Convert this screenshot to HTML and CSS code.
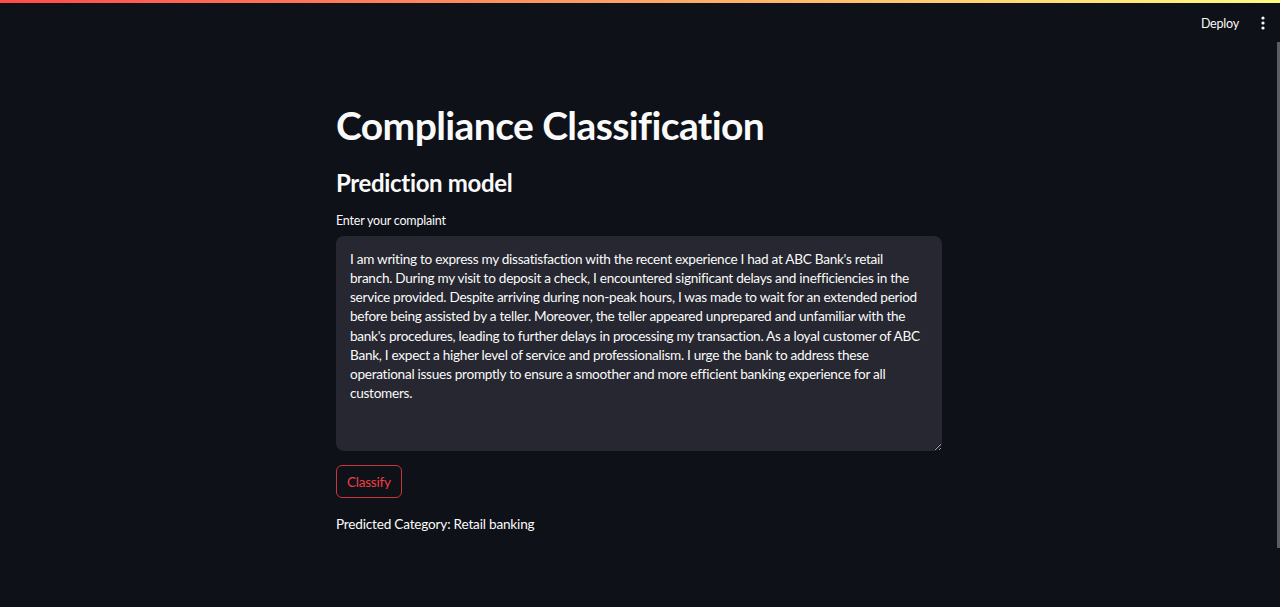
FILE: index.html
```html
<!DOCTYPE html>
<html lang="en">
<head>
<meta charset="utf-8">
<title>Compliance Classification</title>
<link rel="stylesheet" href="styles.css">
</head>
<body>
<div class="decoration"></div>
<header class="topbar">
  <span class="deploy">Deploy</span>
  <span class="menu">
    <svg width="4" height="14" viewBox="0 0 4 14"><circle cx="2" cy="2" r="1.6" fill="#fafafa"/><circle cx="2" cy="7" r="1.6" fill="#fafafa"/><circle cx="2" cy="12" r="1.6" fill="#fafafa"/></svg>
  </span>
</header>
<main class="main">
  <h1 class="title">Compliance Classification</h1>
  <h3 class="subtitle">Prediction model</h3>
  <label class="label" for="complaint">Enter your complaint</label>
  <textarea id="complaint" class="input" wrap="off">I am writing to express my dissatisfaction with the recent experience I had at ABC Bank's retail
branch. During my visit to deposit a check, I encountered significant delays and inefficiencies in the
service provided. Despite arriving during non-peak hours, I was made to wait for an extended period
before being assisted by a teller. Moreover, the teller appeared unprepared and unfamiliar with the
bank's procedures, leading to further delays in processing my transaction. As a loyal customer of ABC
Bank, I expect a higher level of service and professionalism. I urge the bank to address these
operational issues promptly to ensure a smoother and more efficient banking experience for all
customers.</textarea>
  <button class="btn">Classify</button>
  <p class="result">Predicted Category: Retail banking</p>
</main>
<div class="scrollbar"></div>
</body>
</html>
```
FILE: styles.css
```css
* { box-sizing: border-box; }
html, body {
  margin: 0;
  height: 100%;
  overflow: hidden;
}
body {
  background: #0e1117;
  color: #fafafa;
  font-family: "Source Sans Pro", Lato, "Liberation Sans", sans-serif;
}
.decoration {
  height: 3px;
  background: linear-gradient(90deg, #ff4b4b, #fffd80);
}
.topbar {
  height: 40px;
  display: flex;
  justify-content: flex-end;
  align-items: center;
  padding-right: 15px;
  gap: 22px;
}
.deploy {
  font-size: 12.5px;
  letter-spacing: -0.2px;
  color: #fafafa;
}
.menu {
  display: flex;
  align-items: center;
}
.main {
  width: 608px;
  margin: 0 auto;
  padding-top: 56px;
}
.title {
  margin: 0;
  font-size: 39px;
  letter-spacing: -0.6px;
  font-weight: 700;
  line-height: 52px;
}
.subtitle {
  margin: 17px 0 0;
  font-size: 24px;
  letter-spacing: -0.34px;
  font-weight: 700;
  line-height: 30px;
}
.label {
  display: block;
  margin-top: 14px;
  font-size: 12.5px;
  letter-spacing: -0.2px;
  line-height: 18px;
}
.input {
  display: block;
  margin-top: 6px;
  width: 606px;
  height: 215px;
  background: #262730;
  color: #fafafa;
  border: none;
  border-radius: 8px;
  padding: 14px 14px;
  font-family: inherit;
  font-size: 13.6px;
  letter-spacing: -0.28px;
  line-height: 19.15px;
  outline: none;
  overflow: hidden;
  resize: vertical;
}
.btn {
  display: block;
  margin-top: 14px;
  height: 33px;
  padding: 0 10px;
  background: transparent;
  border: 1px solid #c9363c;
  border-radius: 6px;
  color: #ef3e44;
  font-family: inherit;
  font-size: 13.6px;
  letter-spacing: -0.28px;
}
.result {
  margin: 16px 0 0;
  font-size: 13.6px;
  letter-spacing: -0.2px;
  line-height: 20px;
}
.scrollbar {
  position: fixed;
  right: 0;
  top: 42px;
  width: 3px;
  height: 506px;
  background: #5c5c64;
}
```
